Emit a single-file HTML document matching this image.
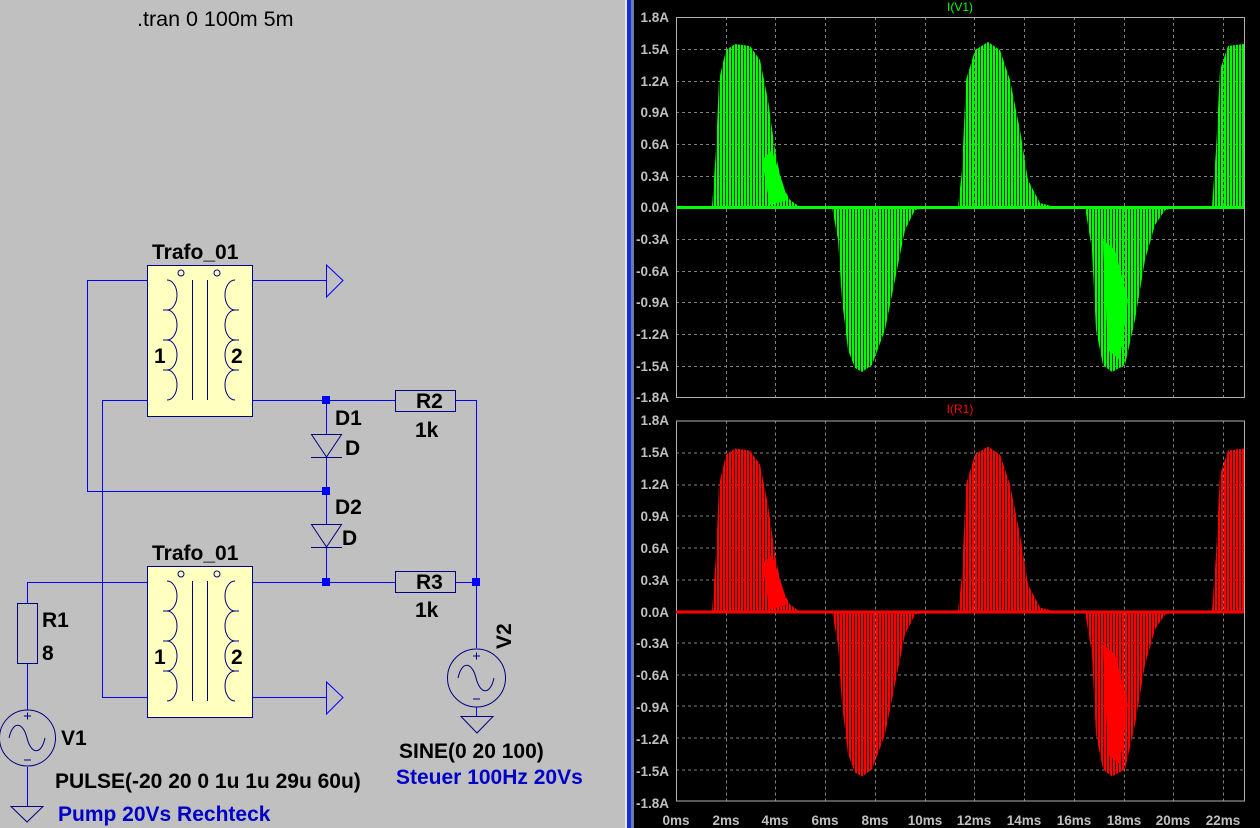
<!DOCTYPE html>
<html><head><meta charset="utf-8"><style>
html,body{margin:0;padding:0;background:#c0c0c0;width:1260px;height:828px;overflow:hidden}
svg{display:block}
.t{font-family:"Liberation Sans",sans-serif;font-weight:bold;font-size:21px;fill:#000}
.b{fill:#0000c8}
.ax{font-family:"Liberation Sans",sans-serif;font-size:13.5px;fill:#c0c0c0;font-weight:bold}
</style></head><body>
<svg width="1260" height="828" viewBox="0 0 1260 828" xmlns="http://www.w3.org/2000/svg">
<defs>
<pattern id="pg" width="3" height="10" patternUnits="userSpaceOnUse"><rect width="2.2" height="10" fill="#00ff00"/></pattern>
<pattern id="pr" width="3" height="10" patternUnits="userSpaceOnUse"><rect width="2.2" height="10" fill="#ff0000"/></pattern>
<g id="tr">
<rect x="147.5" y="0.5" width="105" height="151" fill="#ffffc0" stroke="#000080"/>
<circle cx="181" cy="8" r="3" fill="none" stroke="#000080"/>
<circle cx="217" cy="8" r="3" fill="none" stroke="#000080"/>
<line x1="192.5" y1="15" x2="192.5" y2="135" stroke="#000080"/>
<line x1="207.5" y1="15" x2="207.5" y2="135" stroke="#000080"/>
<path d="M167,15 A10,15 0 0 1 167,45 M163,45 L167,45 A10,15 0 0 1 167,75 M163,75 L167,75 A10,15 0 0 1 167,105 M163,105 L167,105 A10,15 0 0 1 167,135" fill="none" stroke="#000080"/>
<path d="M235,15 A10,15 0 0 0 235,45 M239,45 L235,45 A10,15 0 0 0 235,75 M239,75 L235,75 A10,15 0 0 0 235,105 M239,105 L235,105 A10,15 0 0 0 235,135" fill="none" stroke="#000080"/>
<text x="154" y="98" class="t">1</text><text x="231" y="98" class="t">2</text>
</g>
</defs>
<text x="137" y="26" class="t" style="font-weight:normal;font-size:21.5px">.tran 0 100m 5m</text>
<g fill="none" stroke="#0000ff" stroke-width="1">
<path d="M167,280.5H87.5V491.5H326"/>
<path d="M235,280.5H326"/>
<path d="M326.5,265L343,280.5L326.5,297Z"/>
<path d="M167,400.5H102.5V697.5H167"/>
<path d="M235,400.5H395"/>
<path d="M455,400.5H476.5V648"/>
<path d="M326.5,400V434M326.5,457V524M326.5,547V582"/>
<path d="M167,582.5H27.5V603M27.5,663V710M27.5,767V806"/>
<path d="M235,582.5H395M455,582.5H476"/>
<path d="M235,697.5H326"/>
<path d="M326.5,682L343,697.5L326.5,714Z"/>
<path d="M476.5,707V716"/>
</g>
<g fill="none" stroke="#000080">
<rect x="395.5" y="390.5" width="60" height="21"/>
<rect x="395.5" y="571.5" width="60" height="21"/>
<rect x="17.5" y="603.5" width="20" height="60"/>
<path d="M311.5,434.5H341.5L326.5,457Z M311,457.5H342"/>
<path d="M311.5,524.5H341.5L326.5,547Z M311,547.5H342"/>
<circle cx="476.5" cy="678" r="29"/>
<path d="M458,678 C462,660 472,662 476,678 C480,694 490,696 494,678"/>
<path d="M473,656H480M476.5,652.5V659.5M473,699H480"/>
<circle cx="27.5" cy="738" r="28"/>
<path d="M9,738 C13,720 23,722 27,738 C31,754 41,756 45,738"/>
<path d="M24,716H31M27.5,712.5V719.5M24,760H31"/>
<path d="M461,716.5H493L477,733Z"/>
<path d="M11,806.5H43L27,822Z"/>
</g>
<use href="#tr" y="265"/>
<use href="#tr" y="566"/>
<g fill="#0000ff">
<rect x="322" y="396" width="8" height="8"/><rect x="322" y="487" width="8" height="8"/>
<rect x="322" y="578" width="8" height="8"/><rect x="472" y="578" width="8" height="8"/>
</g>
<text x="152" y="259" class="t">Trafo_01</text>
<text x="152" y="560" class="t">Trafo_01</text>
<text x="335" y="425" class="t">D1</text><text x="345" y="455" class="t">D</text>
<text x="335" y="514" class="t">D2</text><text x="342" y="545" class="t">D</text>
<text x="416" y="408" class="t">R2</text><text x="415" y="437" class="t">1k</text>
<text x="416" y="589" class="t">R3</text><text x="415" y="617" class="t">1k</text>
<text class="t" transform="translate(511,649) rotate(-90)">V2</text>
<text x="42" y="627" class="t">R1</text><text x="42" y="660" class="t">8</text>
<text x="61" y="745" class="t">V1</text>
<text x="55" y="788" class="t">PULSE(-20 20 0 1u 1u 29u 60u)</text>
<text x="58" y="821" class="t b">Pump 20Vs Rechteck</text>
<text x="399" y="758" class="t">SINE(0 20 100)</text>
<text x="396" y="784" class="t b">Steuer 100Hz 20Vs</text>
<rect x="625" y="0" width="2" height="828" fill="#e8e8e8"/>
<rect x="627" y="0" width="4" height="828" fill="#1030e0"/>
<rect x="631" y="0" width="3" height="828" fill="#7078a8"/>
<rect x="634" y="0" width="626" height="828" fill="#000"/>
<g id="p1">
<g stroke="#808080" stroke-dasharray="3,3" stroke-width="1">
<path d="M676,49.5H1244M676,81.5H1244M676,112.5H1244M676,144.5H1244M676,176.5H1244M676,207.5H1244M676,239.5H1244M676,271.5H1244M676,302.5H1244M676,334.5H1244M676,366.5H1244"/>
<path d="M726.5,17V397M775.5,17V397M825.5,17V397M875.5,17V397M925.5,17V397M974.5,17V397M1024.5,17V397M1074.5,17V397M1124.5,17V397M1173.5,17V397M1223.5,17V397"/>
</g>
<rect x="676.5" y="17.5" width="568" height="380" fill="none" stroke="#b0b0b0"/>
</g>
<use href="#p1" y="403.5"/>
<g id="w1" fill="url(#pg)">
<path d="M712,207 L716,150 L719,80 L726,50 L735,44 L750,46 L760,60 L768,100 L775,150 L782,185 L790,200 L800,207Z"/>
<path d="M832,207 L838,240 L842,300 L848,350 L855,368 L862,372 L872,365 L885,330 L897,270 L905,230 L915,210 L930,207Z"/>
<path d="M958,207 L962,170 L966,80 L975,50 L988,42 L1000,50 L1010,80 L1020,130 L1028,180 L1040,203 L1055,207Z"/>
<path d="M1085,207 L1092,250 L1096,330 L1103,365 L1112,372 L1125,365 L1135,320 L1145,260 L1155,225 L1165,210 L1180,207Z"/>
<path d="M1212,207 L1216,150 L1220,70 L1228,46 L1244,44 L1244,207Z"/>
</g>
<g fill="#00ff00">
<rect x="676" y="206" width="568" height="3"/>
<path d="M762,160 L772,150 L780,175 L788,200 L770,205Z"/>
<path d="M1103,240 L1115,250 L1128,300 L1120,360 L1108,350Z"/>
</g>
<g transform="translate(0,404.5)" fill="url(#pr)">
<path d="M712,207 L716,150 L719,80 L726,50 L735,44 L750,46 L760,60 L768,100 L775,150 L782,185 L790,200 L800,207Z"/>
<path d="M832,207 L838,240 L842,300 L848,350 L855,368 L862,372 L872,365 L885,330 L897,270 L905,230 L915,210 L930,207Z"/>
<path d="M958,207 L962,170 L966,80 L975,50 L988,42 L1000,50 L1010,80 L1020,130 L1028,180 L1040,203 L1055,207Z"/>
<path d="M1085,207 L1092,250 L1096,330 L1103,365 L1112,372 L1125,365 L1135,320 L1145,260 L1155,225 L1165,210 L1180,207Z"/>
<path d="M1212,207 L1216,150 L1220,70 L1228,46 L1244,44 L1244,207Z"/>
</g>
<g transform="translate(0,404.5)" fill="#ff0000">
<rect x="676" y="206" width="568" height="3"/>
<path d="M762,160 L772,150 L780,175 L788,200 L770,205Z"/>
<path d="M1103,240 L1115,250 L1128,300 L1120,360 L1108,350Z"/>
</g>
<text x="960" y="11" font-family="Liberation Sans,sans-serif" font-size="12" fill="#00ff00" text-anchor="middle">I(V1)</text>
<text x="960" y="413" font-family="Liberation Sans,sans-serif" font-size="12" fill="#ff0000" text-anchor="middle">I(R1)</text>
<g class="ax" text-anchor="end">
<text x="669" y="22">1.8A</text><text x="669" y="54">1.5A</text><text x="669" y="86">1.2A</text><text x="669" y="117">0.9A</text><text x="669" y="149">0.6A</text><text x="669" y="181">0.3A</text><text x="669" y="212">0.0A</text><text x="669" y="244">-0.3A</text><text x="669" y="276">-0.6A</text><text x="669" y="307">-0.9A</text><text x="669" y="339">-1.2A</text><text x="669" y="371">-1.5A</text><text x="669" y="402">-1.8A</text>
<text x="669" y="425">1.8A</text><text x="669" y="457">1.5A</text><text x="669" y="489">1.2A</text><text x="669" y="521">0.9A</text><text x="669" y="553">0.6A</text><text x="669" y="585">0.3A</text><text x="669" y="617">0.0A</text><text x="669" y="648">-0.3A</text><text x="669" y="680">-0.6A</text><text x="669" y="712">-0.9A</text><text x="669" y="744">-1.2A</text><text x="669" y="776">-1.5A</text><text x="669" y="808">-1.8A</text>
</g>
<g class="ax" text-anchor="middle">
<text x="676" y="825">0ms</text><text x="726" y="825">2ms</text><text x="775" y="825">4ms</text><text x="825" y="825">6ms</text><text x="875" y="825">8ms</text><text x="925" y="825">10ms</text><text x="974" y="825">12ms</text><text x="1024" y="825">14ms</text><text x="1074" y="825">16ms</text><text x="1124" y="825">18ms</text><text x="1173" y="825">20ms</text><text x="1223" y="825">22ms</text>
</g>
</svg>
</body></html>
